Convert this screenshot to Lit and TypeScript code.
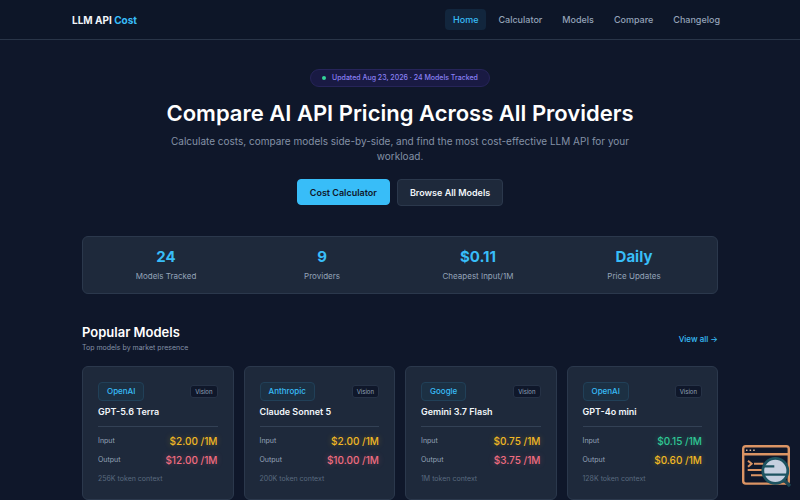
import { LitElement, html, css } from "lit";
import { customElement, property } from "lit/decorators.js";

interface Model {
  provider: string;
  name: string;
  input: string;
  inputTone: string;
  output: string;
  outputTone: string;
  context: string;
}

const NAV = ["Home", "Calculator", "Models", "Compare", "Changelog"];

const STATS = [
  ["24", "Models Tracked"],
  ["9", "Providers"],
  ["$0.11", "Cheapest Input/1M"],
  ["Daily", "Price Updates"],
];

const MODELS: Model[] = [
  { provider: "OpenAI", name: "GPT-5.6 Terra", input: "$2.00", inputTone: "mid", output: "$12.00", outputTone: "high", context: "256K" },
  { provider: "Anthropic", name: "Claude Sonnet 5", input: "$2.00", inputTone: "mid", output: "$10.00", outputTone: "high", context: "200K" },
  { provider: "Google", name: "Gemini 3.7 Flash", input: "$0.75", inputTone: "mid", output: "$3.75", outputTone: "high", context: "1M" },
  { provider: "OpenAI", name: "GPT-4o mini", input: "$0.15", inputTone: "low", output: "$0.60", outputTone: "mid", context: "128K" },
];

@customElement("model-card")
export class ModelCard extends LitElement {
  @property({ attribute: false }) model!: Model;

  static styles = css`
    :host {
      display: block;
      min-width: 0;
      box-sizing: border-box;
      padding: 15px;
      border: 1px solid #2b384c;
      border-radius: 6px;
      background: #1e293b;
    }
    .top {
      display: flex;
      align-items: center;
      justify-content: space-between;
    }
    .provider {
      padding: 0 8px;
      border: 1px solid #214058;
      border-radius: 4px;
      background: #1c3043;
      color: #38bdf8;
      font-size: 8px;
      font-weight: 500;
      line-height: 17px;
    }
    .tag {
      padding: 0 4px;
      border: 1px solid #263246;
      border-radius: 3px;
      background: #0f172a;
      color: #94a3b8;
      font-size: 6px;
      line-height: 11px;
    }
    .name {
      margin: 4px 0 7px;
      color: #f1f5f9;
      font-size: 9px;
      font-weight: 600;
      line-height: 14px;
    }
    .prices {
      margin: 0;
      padding-top: 4px;
      border-top: 1px solid #334155;
    }
    .row {
      display: flex;
      align-items: center;
      justify-content: space-between;
      height: 19px;
    }
    dt {
      color: #94a3b8;
      font-size: 7px;
    }
    dd {
      margin: 0;
      font-size: 10px;
      font-weight: 500;
    }
    .low {
      color: #2fc795;
      text-shadow: 0 0 6px rgba(52, 211, 153, 0.3);
    }
    .mid {
      color: #f0b824;
      text-shadow: 0 0 6px rgba(251, 191, 36, 0.3);
    }
    .high {
      color: #f06c80;
      text-shadow: 0 0 6px rgba(251, 113, 133, 0.3);
    }
    .context {
      margin: 5px 0 0;
      color: #5a697f;
      font-size: 7px;
      line-height: 10px;
    }
  `;

  render() {
    const m = this.model;
    return html`
      <div class="top">
        <span class="provider">${m.provider}</span>
        <span class="tag">Vision</span>
      </div>
      <h3 class="name">${m.name}</h3>
      <dl class="prices">
        <div class="row"><dt>Input</dt><dd class=${m.inputTone}>${m.input} /1M</dd></div>
        <div class="row"><dt>Output</dt><dd class=${m.outputTone}>${m.output} /1M</dd></div>
      </dl>
      <p class="context">${m.context} token context</p>
    `;
  }
}

@customElement("app-root")
export class AppRoot extends LitElement {
  static styles = css`
    :host {
      display: block;
      min-height: 100vh;
      background: #0f172a;
      color: #f1f5f9;
      font-family: Inter, "Liberation Sans", sans-serif;
    }
    a {
      text-decoration: none;
    }
    .header {
      border-bottom: 1px solid #293548;
      background: #0d1628;
    }
    .bar {
      display: flex;
      align-items: center;
      justify-content: space-between;
      max-width: 656px;
      height: 39px;
      margin: 0 auto;
    }
    .logo {
      color: #f1f5f9;
      font-size: 10px;
      font-weight: 700;
    }
    .accent {
      color: #38bdf8;
    }
    .nav {
      display: flex;
      gap: 4px;
    }
    .link {
      padding: 0 8px;
      border-radius: 4px;
      color: #94a3b8;
      font-size: 9px;
      font-weight: 500;
      line-height: 21px;
    }
    .link.active {
      background: #12263d;
      color: #38bdf8;
    }
    .main {
      max-width: 636px;
      margin: 0 auto;
    }
    .hero {
      display: flex;
      flex-direction: column;
      align-items: center;
      padding: 29px 0 30px;
      text-align: center;
    }
    .update {
      display: flex;
      align-items: center;
      gap: 6px;
      padding: 0 11px;
      border: 1px solid #262459;
      border-radius: 9px;
      background: #191a43;
      color: #8b80f5;
      font-size: 7px;
      font-weight: 500;
      line-height: 16px;
    }
    .dot {
      width: 4px;
      height: 4px;
      border-radius: 50%;
      background: #34d399;
    }
    .title {
      margin: 12px 0 6px;
      color: #ffffff;
      font-size: 22px;
      font-weight: 600;
      line-height: 29px;
    }
    .lead {
      max-width: 470px;
      margin: 0;
      color: #8491a6;
      font-size: 10px;
      line-height: 15px;
    }
    .actions {
      display: flex;
      gap: 7px;
      margin-top: 15px;
    }
    .button {
      box-sizing: border-box;
      height: 27px;
      padding: 0 12px;
      border: 1px solid #2b384c;
      border-radius: 4px;
      background: #1e293b;
      color: #f1f5f9;
      font-family: inherit;
      font-size: 9px;
      font-weight: 600;
    }
    .button.primary {
      height: 26px;
      border-color: #38bdf8;
      background: #38bdf8;
      color: #0f172a;
    }
    .stats {
      display: grid;
      grid-template-columns: repeat(4, 1fr);
      margin: 0;
      padding: 9px 5px;
      border: 1px solid #2b384c;
      border-radius: 6px;
      background: #1e293b;
      text-align: center;
    }
    .stat {
      display: flex;
      flex-direction: column-reverse;
    }
    .value {
      margin: 0;
      color: #38bdf8;
      font-size: 15px;
      font-weight: 700;
      line-height: 22px;
    }
    .label {
      color: #94a3b8;
      font-size: 8px;
      line-height: 16px;
    }
    .heading {
      display: flex;
      align-items: center;
      justify-content: space-between;
      margin: 29px 0 11px;
    }
    .section-title {
      margin: 0;
      color: #ffffff;
      font-size: 13px;
      font-weight: 600;
      line-height: 18px;
    }
    .note {
      margin: 0;
      color: #8491a6;
      font-size: 7px;
      line-height: 14px;
    }
    .all {
      color: #38bdf8;
      font-size: 8px;
      font-weight: 500;
    }
    .cards {
      display: grid;
      grid-template-columns: repeat(4, 1fr);
      gap: 10px;
    }
    .badge {
      position: fixed;
      right: 9px;
      bottom: 11px;
      width: 50px;
      height: 46px;
    }
  `;

  render() {
    return html`
      <header class="header">
        <div class="bar">
          <a class="logo" href="#">LLM API <span class="accent">Cost</span></a>
          <nav class="nav">
            ${NAV.map((n, i) => html`<a class="link ${i === 0 ? "active" : ""}" href="#">${n}</a>`)}
          </nav>
        </div>
      </header>
      <main class="main">
        <section class="hero">
          <div class="update"><span class="dot"></span>Updated Aug 23, 2026 · 24 Models Tracked</div>
          <h1 class="title">Compare AI API Pricing Across All Providers</h1>
          <p class="lead">
            Calculate costs, compare models side-by-side, and find the most cost-effective LLM API for your workload.
          </p>
          <div class="actions">
            <button class="button primary">Cost Calculator</button>
            <button class="button">Browse All Models</button>
          </div>
        </section>
        <dl class="stats">
          ${STATS.map(([v, l]) => html`<div class="stat"><dt class="label">${l}</dt><dd class="value">${v}</dd></div>`)}
        </dl>
        <section>
          <div class="heading">
            <div>
              <h2 class="section-title">Popular Models</h2>
              <p class="note">Top models by market presence</p>
            </div>
            <a class="all" href="#">View all →</a>
          </div>
          <div class="cards">
            ${MODELS.map((m) => html`<model-card .model=${m}></model-card>`)}
          </div>
        </section>
      </main>
      <svg class="badge" viewBox="0 0 50 46" fill="none" aria-hidden="true">
        <rect x="2.2" y="3.2" width="45.6" height="37.4" rx="2.6" stroke="#db9464" stroke-width="2.4" />
        <path d="M2 11.2H48" stroke="#db9464" stroke-width="2.6" />
        <path d="M5 7.3h1.5M8.6 7.3h1.5M12.2 7.3h1.5" stroke="#e0b596" stroke-width="1.4" />
        <path d="M7 17.7l3.6 3-3.6 3" stroke="#db9464" stroke-width="2" />
        <path d="M13 20.7h9.5M6.7 27h15M10 32.3h12" stroke="#db9464" stroke-width="2" />
        <path d="M43.5 37.5l5.5 5.5" stroke="#1d4855" stroke-width="3.2" />
        <circle cx="34.3" cy="27.8" r="12.5" fill="#c6d0e0" stroke="#1d5360" stroke-width="2.8" />
        <path d="M22 23.3h11.3M23 31.7h22" stroke="#1d5360" stroke-width="2.2" />
      </svg>
    `;
  }
}
